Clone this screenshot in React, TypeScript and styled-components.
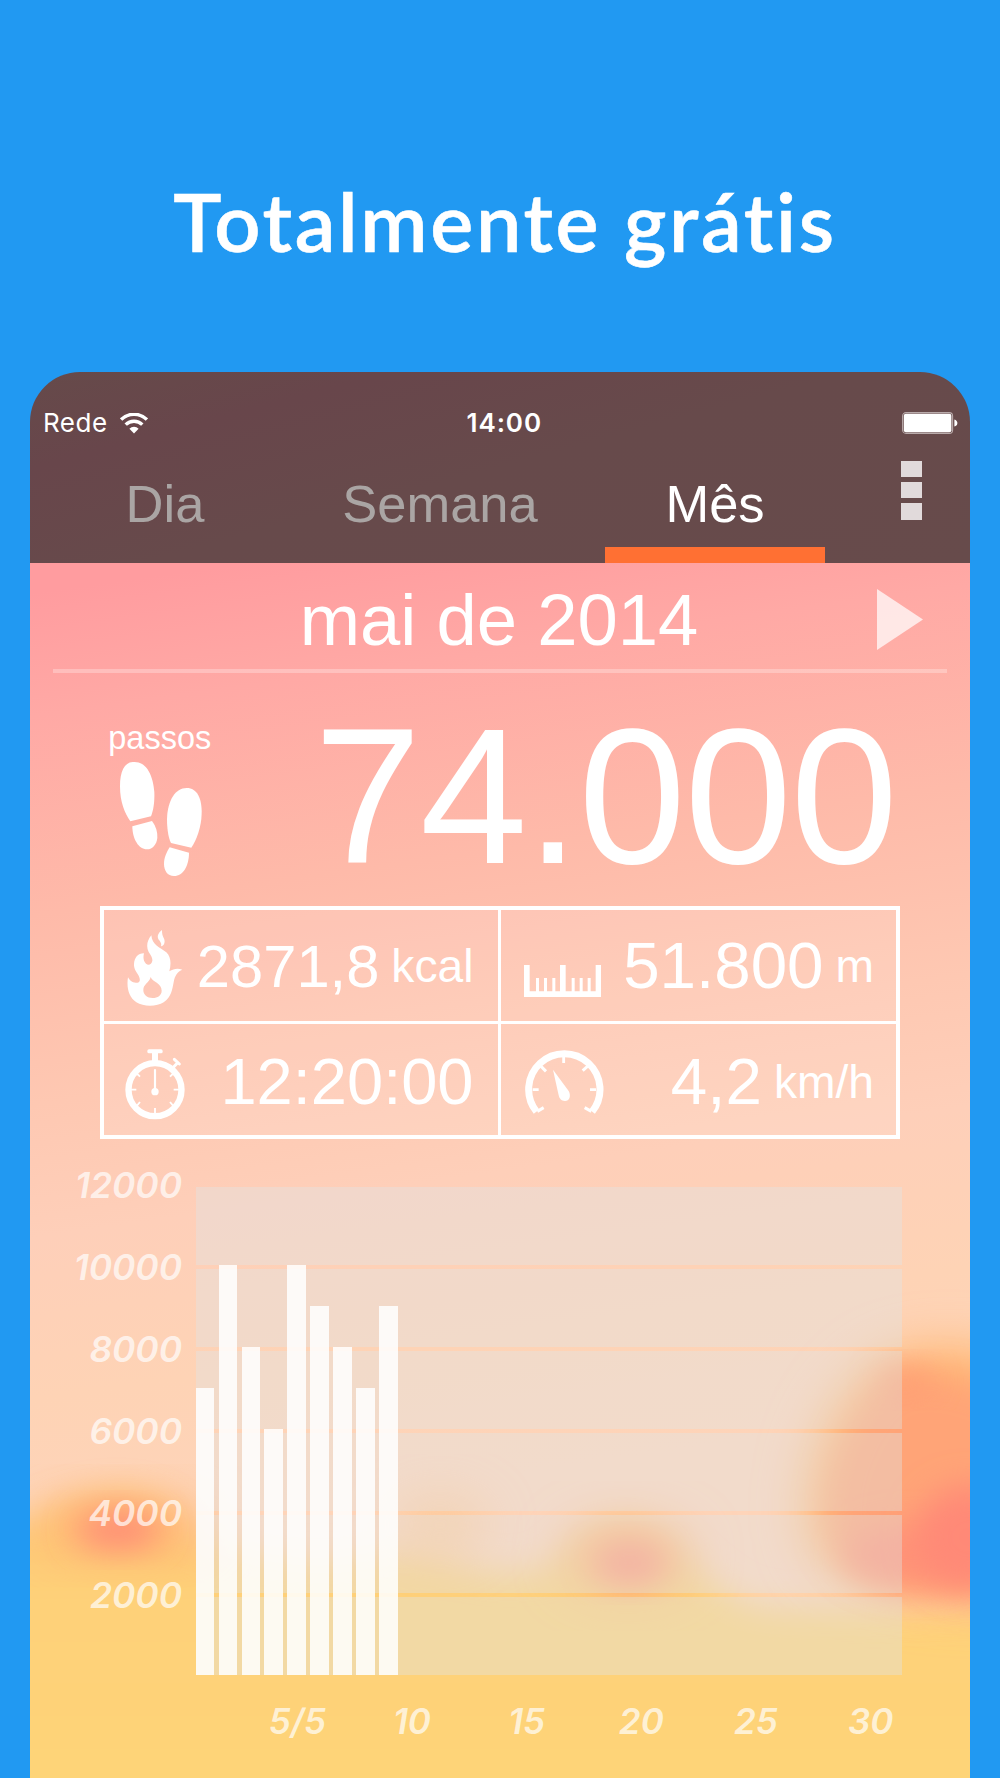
import React from 'react';
import styled, { createGlobalStyle } from 'styled-components';

const SANS = "'Liberation Sans', Arial, sans-serif";
const UI = "Inter, 'Noto Sans', sans-serif";

const GlobalStyle = createGlobalStyle`
  *, *::before, *::after { box-sizing: border-box; }
  html, body { margin: 0; padding: 0; background: #2199f2; }
`;

const Page = styled.main`
  display: flex;
  flex-direction: column;
  align-items: center;
  width: 1000px;
  height: 1778px;
  overflow: hidden;
  background: #2199f2;
`;

const Title = styled.h1`
  display: flex;
  justify-content: center;
  flex: none;
  width: 100%;
  height: 372px;
  margin: 0;
  padding: 173px 0 0 10px;
  color: #fff;
  font: 600 81px/96px Lato, 'Open Sans', sans-serif;
  letter-spacing: 2.65px;
  -webkit-text-stroke: 0.6px #fff;
  white-space: nowrap;
`;

const Phone = styled.section`
  display: flex;
  flex-direction: column;
  flex: none;
  width: 940px;
  height: 1406px;
  border-radius: 50px 50px 0 0;
  overflow: hidden;
  color: #fff;
`;

const Header = styled.header`
  flex: none;
  height: 191px;
  padding-top: 28px;
  background: linear-gradient(165deg, #664a4a 0%, #68464b 22%, #674a4b 50%, #674b4b 100%);
`;

const StatusBar = styled.div`
  display: grid;
  grid-template-columns: 1fr auto 1fr;
  align-items: center;
  height: 44px;
  padding: 0 12.5px 0 13px;
  font: 400 26px/44px ${UI};
`;

const Carrier = styled.div`
  display: flex;
  align-items: center;
  gap: 12.5px;
  padding-top: 1px;
  letter-spacing: 0.5px;
`;

const Clock = styled.div`
  padding: 1px 0 0 8px;
  font-weight: 600;
  letter-spacing: 0.9px;
`;

const Battery = styled.div`
  display: flex;
  align-items: center;
  justify-content: flex-end;
`;

const TabBar = styled.nav`
  display: flex;
  height: 119px;
  margin-left: -2.5px;
`;

const Tab = styled.div<{ $active?: boolean }>`
  position: relative;
  width: 275px;
  color: ${p => (p.$active ? '#fff' : '#aaa5a4')};
  font: 400 52.5px/120px ${SANS};
  text-align: center;

  &::after {
    content: '';
    display: ${p => (p.$active ? 'block' : 'none')};
    position: absolute;
    left: 27.5px;
    right: 27.5px;
    bottom: 0;
    height: 16px;
    background: #ff7033;
  }
`;

const Menu = styled.div`
  display: flex;
  flex-direction: column;
  gap: 5px;
  margin: 17px 0 0 48.5px;
`;

const MenuDot = styled.span`
  width: 20.5px;
  height: 16.2px;
  background: #e1dadb;
`;

const Body = styled.div`
  position: relative;
  flex: 1;
`;

const Scenery = styled.svg`
  position: absolute;
  inset: 0;
  width: 940px;
  height: 1215px;
`;

const Content = styled.div`
  position: relative;
  display: flex;
  flex-direction: column;
`;

const MonthRow = styled.div`
  display: grid;
  grid-template-columns: 1fr auto 1fr;
  align-items: center;
  height: 106px;
  padding: 7px 47px 0 45px;
  font: 400 72.4px/99px ${SANS};
`;

const NextArrow = styled.svg`
  grid-column: 3;
  justify-self: end;
  display: block;
`;

const Month = styled.div`
  grid-column: 2;
`;

const Divider = styled.div`
  height: 4px;
  margin: 0 23.5px 0 22.5px;
  background: rgba(255, 255, 255, 0.28);
`;

const StepsRow = styled.div`
  display: flex;
  justify-content: space-between;
  align-items: flex-start;
  height: 233px;
  padding: 0 73.5px 0 78.3px;
`;

const StepsLabel = styled.div`
  display: flex;
  flex-direction: column;
  align-items: center;
  gap: 5.5px;
  padding-top: 47px;
  font: 400 32.5px/36px ${SANS};

  svg { margin-left: 2px; }
`;

const StepsCount = styled.div`
  margin-top: 26.5px;
  font: 400 193px/192px ${SANS};
  letter-spacing: -1.3px;
`;

const Stats = styled.div`
  display: grid;
  grid-template-columns: 397px 395px;
  grid-template-rows: 114px 111px;
  width: 800px;
  margin-left: 70px;
  border: 4px solid #fff;
`;

const Stat = styled.div<{ $left?: boolean; $top?: boolean }>`
  display: flex;
  align-items: center;
  gap: 12px;
  padding-top: ${p => (p.$top ? 2 : 5)}px;
  padding-left: 21.5px;
  padding-right: ${p => (p.$left ? 24.5 : 22)}px;
  border-right: ${p => (p.$left ? '3px solid #fff' : 'none')};
  border-bottom: ${p => (p.$top ? '3px solid #fff' : 'none')};
  background: rgba(255, 255, 255, 0.12);
  background-clip: padding-box;
`;

const IconSlot = styled.div<{ $width: number; $drop: number }>`
  display: flex;
  justify-content: center;
  width: ${p => p.$width}px;
  margin-right: auto;
  padding-top: ${p => p.$drop * 2}px;

  svg { flex: none; }
`;

const Value = styled.span<{ $size: number }>`
  font: 400 ${p => p.$size}px/1.1 ${SANS};
`;

const Unit = styled.span`
  font: 400 46.2px/1.1 ${SANS};
`;

const Chart = styled.div`
  display: flex;
  align-items: flex-start;
`;

const YAxis = styled.div`
  display: flex;
  flex-direction: column;
  width: 152px;
  padding-top: 5.8px;
  color: rgba(255, 255, 255, 0.7);
  font: italic 600 35.4px/82.1px ${UI};
  text-align: right;
`;

const Plot = styled.div`
  display: grid;
  width: 706.5px;
  height: 488px;
  margin: 48px 0 0 13.7px;
`;

const Bands = styled.div`
  grid-area: 1 / 1;
  display: flex;
  flex-direction: column;
  gap: 4px;
`;

const Band = styled.div`
  flex: 1;
  background: rgba(223, 230, 231, 0.39);
`;

const Bars = styled.div`
  grid-area: 1 / 1;
  display: grid;
  grid-template-columns: repeat(31, 1fr);
  column-gap: 4.2px;
  align-items: end;
`;

const Bar = styled.div`
  background: rgba(255, 255, 255, 0.86);
`;

const XAxis = styled.div`
  display: flex;
  margin: 26px 0 0 210px;
  color: rgba(255, 255, 255, 0.7);
  font: italic 600 35px/40px ${UI};
`;

const XLabel = styled.span`
  width: 114.66px;
  text-align: center;
`;

const DAILY_STEPS = [7000, 10000, 8000, 6000, 10000, 9000, 8000, 7000, 9000];
const Y_LABELS = ['12000', '10000', '8000', '6000', '4000', '2000'];
const X_LABELS = ['5/5', '10', '15', '20', '25', '30'];
const PX_PER_STEP = 0.04103;

const WifiIcon = () => (
  <svg width="28" height="21" viewBox="0 0 28 21" fill="none" stroke="#fff" strokeWidth="3.4">
    <path d="M1.1 6.6A18.2 18.2 0 0 1 26.9 6.6" />
    <path d="M5.7 11.6A11.8 11.8 0 0 1 22.3 11.6" />
    <path d="M14 20.4L9.4 15.8A6.4 6.4 0 0 1 18.6 15.8Z" fill="#fff" stroke="none" />
  </svg>
);

const BatteryIcon = () => (
  <svg width="56" height="22" viewBox="0 0 56 22">
    <rect x="0.6" y="0.6" width="50" height="20.8" rx="3.4" fill="none" stroke="#b9abab" strokeWidth="1.1" />
    <rect x="1.8" y="1.8" width="47.6" height="18.4" rx="2" fill="#fff" />
    <path d="M52.4 7.4Q55.4 8.4 55.4 11T52.4 14.6Z" fill="#fff" />
  </svg>
);

const FeetIcon = () => (
  <svg width="82" height="114" viewBox="90 155 246 342" fill="#fff">
    <path d="M134 155C105 153 90 180 90 228C90 275 104 308 121 333L183 318C191 300 194 272 193 245C190 200 172 155 134 155Z" />
    <path d="M127 348L186 332C198 348 203 365 202 382C200 402 188 417 171 417C145 417 127 385 127 348Z" />
    <path d="M290 233C322 233 336 265 335 310C334 350 320 388 304 412L243 398C234 380 231 350 231 325C233 270 256 233 290 233Z" />
    <path d="M239 411L297 427C297 465 280 497 252 497C232 497 222 480 222 460C222 442 230 425 239 411Z" />
  </svg>
);

const FlameIcon = () => (
  <svg width="56" height="76" viewBox="110 88 168 228" fill="#fff">
    <path
      fillRule="evenodd"
      d="M183 104C170 120 167 138 175 154C182 165 187 172 186 180C184 192 174 195 167 189C159 182 158 170 161 158C142 158 132 172 131 190C130 205 138 213 145 225C151 237 149 246 141 246C127 248 118 240 113 230C108 260 115 290 138 305C160 319 200 318 220 305C243 290 246 265 250 245C253 225 262 212 276 207C262 202 250 204 237 212C243 190 242 168 228 155C208 140 185 133 183 104ZM181 229C186 245 214 246 214 270C214 284 202 292 187 292C170 292 159 282 159 268C159 250 176 248 181 229Z"
    />
    <path d="M215 88C202 98 198 110 208 120C212 126 214 130 212 137C222 136 226 122 220 112C216 104 215 98 215 88Z" />
  </svg>
);

const StopwatchIcon = () => (
  <svg width="60" height="70.7" viewBox="104 446 180 212" fill="none" stroke="#fff">
    <circle cx="194" cy="568" r="79.5" strokeWidth="19" />
    <rect x="171" y="447" width="46" height="12" rx="5" fill="#fff" stroke="none" />
    <path d="M194 455V486" strokeWidth="18" />
    <path d="M243 507L262 487" strokeWidth="9" />
    <path d="M252 477L267 491" strokeWidth="9" strokeLinecap="round" />
    <path d="M194 509V572" strokeWidth="6.5" strokeLinecap="round" />
    <circle cx="194" cy="574" r="11" fill="#fff" stroke="none" />
    <path
      strokeWidth="5.5"
      d="M122 568H138M250 568H266M194 623V641M138 518L149 529M250 518L239 529M138 618L149 605M250 618L239 605"
    />
  </svg>
);

const RulerIcon = () => (
  <svg width="77" height="32" viewBox="103 195 231 96" fill="#fff">
    <path d="M103 195H120V274H211V195H228V274H318V195H334V291H103Z" />
    <path d="M139 234h9v42h-9zM163 234h9v42h-9zM188 234h9v42h-9zM246 234h9v42h-9zM270 234h9v42h-9zM294 234h9v42h-9z" />
  </svg>
);

const GaugeIcon = () => (
  <svg width="79" height="64" viewBox="107 447 237 192" fill="none" stroke="#fff">
    <path d="M141.5 632A107 107 0 1 1 308.5 632" strokeWidth="21" />
    <path d="M144 631L163 620M306 631L286 620" strokeWidth="9" />
    <path d="M130 566H148M302 566H320M223 466V486" strokeWidth="8.5" />
    <path d="M153 494L170 511M297 494L280 509" strokeWidth="9" />
    <path d="M191 506L238 570C246 585 240 600 227 600C215 600 210 592 208 583Z" fill="#fff" stroke="none" />
  </svg>
);

const Sunset = () => (
  <Scenery viewBox="30 563 940 1215" preserveAspectRatio="none" aria-hidden="true">
    <defs>
      <linearGradient id="sky" gradientUnits="userSpaceOnUse" x1="410" y1="540" x2="540" y2="1470">
        <stop offset="0" stopColor="#ff9c9f" />
        <stop offset="0.13" stopColor="#ffa9a5" />
        <stop offset="0.34" stopColor="#febaa9" />
        <stop offset="0.54" stopColor="#fec8b2" />
        <stop offset="0.68" stopColor="#fecfb9" />
        <stop offset="0.85" stopColor="#fed3b5" />
        <stop offset="1" stopColor="#fed4b9" />
      </linearGradient>
      <linearGradient id="ground" x1="0" y1="0" x2="0" y2="1">
        <stop offset="0" stopColor="#fec275" />
        <stop offset="0.28" stopColor="#fed179" />
        <stop offset="1" stopColor="#fed578" />
      </linearGradient>
      <filter id="soft" x="-60%" y="-60%" width="220%" height="220%"><feGaussianBlur stdDeviation="16" /></filter>
      <filter id="mist" x="-60%" y="-60%" width="220%" height="220%"><feGaussianBlur stdDeviation="24" /></filter>
    </defs>
    <rect x="30" y="563" width="940" height="1215" fill="url(#sky)" />
    <path
      d="M-60 1535L30 1518C80 1495 130 1485 165 1508C200 1545 260 1565 340 1562C390 1552 420 1552 450 1560C480 1572 510 1578 550 1566C580 1535 600 1525 630 1526C680 1535 700 1590 760 1606C850 1614 950 1604 1060 1604V1860H-60Z"
      fill="url(#ground)"
      filter="url(#soft)"
    />
    <ellipse cx="440" cy="1525" rx="50" ry="32" fill="#fec282" opacity="0.6" filter="url(#mist)" />
    <ellipse cx="125" cy="1526" rx="86" ry="28" fill="#ffb974" filter="url(#mist)" />
    <ellipse cx="118" cy="1530" rx="42" ry="18" fill="#ff8a76" filter="url(#soft)" />
    <ellipse cx="628" cy="1556" rx="64" ry="34" fill="#ffb878" filter="url(#mist)" />
    <ellipse cx="630" cy="1563" rx="36" ry="19" fill="#ff9078" filter="url(#soft)" />
    <path
      d="M1060 1370C980 1338 900 1335 860 1375C820 1412 800 1470 805 1530C820 1590 880 1604 1060 1604Z"
      fill="#ffb974"
      filter="url(#mist)"
    />
    <path
      d="M1060 1425C985 1370 905 1355 870 1395C835 1440 818 1500 832 1545C855 1585 900 1598 1060 1596Z"
      fill="#ffa477"
      filter="url(#soft)"
    />
    <ellipse cx="905" cy="1380" rx="28" ry="14" fill="#ff9673" opacity="0.7" filter="url(#soft)" />
    <ellipse cx="915" cy="1555" rx="70" ry="30" fill="#ff9377" filter="url(#soft)" />
    <ellipse cx="970" cy="1537" rx="54" ry="52" fill="#ff8977" filter="url(#soft)" />
  </Scenery>
);

export default function App() {
  return (
    <Page>
      <GlobalStyle />
      <Title>Totalmente grátis</Title>
      <Phone>
        <Header>
          <StatusBar>
            <Carrier>
              Rede
              <WifiIcon />
            </Carrier>
            <Clock>14:00</Clock>
            <Battery>
              <BatteryIcon />
            </Battery>
          </StatusBar>
          <TabBar>
            <Tab>Dia</Tab>
            <Tab>Semana</Tab>
            <Tab $active>Mês</Tab>
            <Menu>
              <MenuDot />
              <MenuDot />
              <MenuDot />
            </Menu>
          </TabBar>
        </Header>
        <Body>
          <Sunset />
          <Content>
            <MonthRow>
              <Month>mai de 2014</Month>
              <NextArrow width="46" height="61" viewBox="0 0 46 61">
                <path d="M0 0L46 30.5L0 61Z" fill="#fff" fillOpacity="0.72" />
              </NextArrow>
            </MonthRow>
            <Divider />
            <StepsRow>
              <StepsLabel>
                passos
                <FeetIcon />
              </StepsLabel>
              <StepsCount>74.000</StepsCount>
            </StepsRow>
            <Stats>
              <Stat $left $top>
                <IconSlot $width={60} $drop={1}><FlameIcon /></IconSlot>
                <Value $size={59.7}>2871,8</Value>
                <Unit>kcal</Unit>
              </Stat>
              <Stat $top>
                <IconSlot $width={80} $drop={14.5}><RulerIcon /></IconSlot>
                <Value $size={65.5}>51.800</Value>
                <Unit>m</Unit>
              </Stat>
              <Stat $left>
                <IconSlot $width={58} $drop={2.2}><StopwatchIcon /></IconSlot>
                <Value $size={65}>12:20:00</Value>
              </Stat>
              <Stat>
                <IconSlot $width={84} $drop={0.2}><GaugeIcon /></IconSlot>
                <Value $size={65.5}>4,2</Value>
                <Unit>km/h</Unit>
              </Stat>
            </Stats>
            <Chart>
              <YAxis>
                {Y_LABELS.map(label => <span key={label}>{label}</span>)}
              </YAxis>
              <Plot>
                <Bands>
                  {Y_LABELS.map(label => <Band key={label} />)}
                </Bands>
                <Bars>
                  {DAILY_STEPS.map((steps, day) => (
                    <Bar key={day} style={{ height: steps * PX_PER_STEP }} />
                  ))}
                </Bars>
              </Plot>
            </Chart>
            <XAxis>
              {X_LABELS.map(label => <XLabel key={label}>{label}</XLabel>)}
            </XAxis>
          </Content>
        </Body>
      </Phone>
    </Page>
  );
}
